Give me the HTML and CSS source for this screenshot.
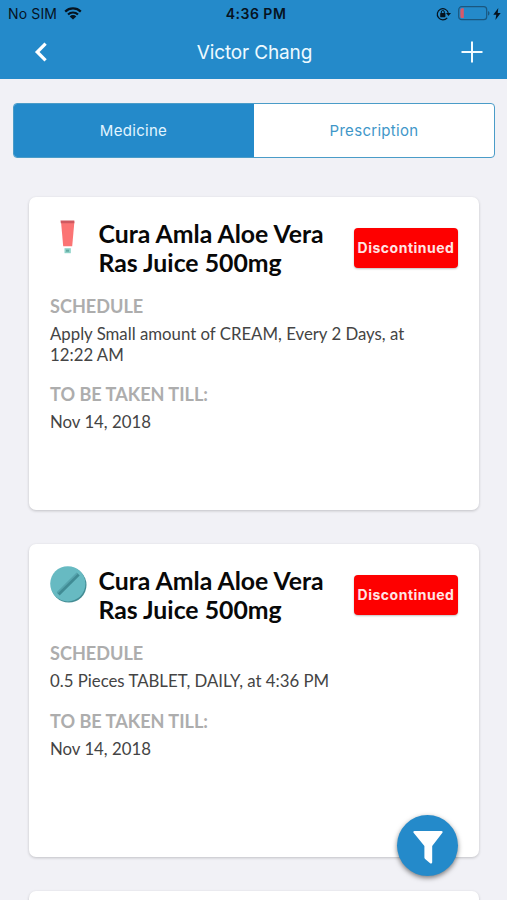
FILE: index.html
```html
<!DOCTYPE html>
<html lang="en">
<head>
    <meta charset="UTF-8">
    <meta name="viewport" content="width=device-width, initial-scale=1.0">
    <title>Victor Chang</title>
    <link rel="stylesheet" href="styles.css">
</head>
<body>
    <header class="header">
        <div class="status-bar">
            <div class="carrier">
                <span>No SIM</span>
                <svg class="wifi" viewBox="0 0 18 13">
                    <path d="M1.2 4.6a11.2 11.2 0 0 1 15.6 0M4 7.5a7.2 7.2 0 0 1 10 0" fill="none" stroke="#06131f" stroke-width="2.2"/>
                    <path d="M9 12.6L5.7 9.4a4.7 4.7 0 0 1 6.6 0z" fill="#06131f"/>
                </svg>
            </div>
            <div class="time">4:36 PM</div>
            <div class="indicators">
                <svg class="lock" viewBox="0 0 15 14">
                    <path d="M11.2 10.8a5.6 5.6 0 1 1 1.1-4.9" fill="none" stroke="#06131f" stroke-width="1.2"/>
                    <path d="M10 6h5l-2.5 3z" fill="#06131f"/>
                    <rect x="4.2" y="6" width="5.2" height="4.2" rx=".6" fill="#06131f"/>
                    <path d="M5.3 6.2V5a1.5 1.5 0 0 1 3 0v1.2" fill="none" stroke="#06131f"/>
                </svg>
                <svg class="battery" viewBox="0 0 32 15">
                    <rect x=".7" y=".7" width="28" height="13" rx="3" fill="none" stroke="#1a577f" stroke-width="1.2"/>
                    <path d="M30 5v4.6c2-.8 2-3.8 0-4.6z" fill="#1a577f"/>
                    <path d="M4 2.3h1.8v9.8H4a1.6 1.6 0 0 1-1.6-1.6V3.9A1.6 1.6 0 0 1 4 2.3z" fill="#d9596a"/>
                </svg>
                <svg class="bolt" viewBox="0 0 8 12">
                    <path d="M5.3 0L.3 6.8h3L2.4 12l5.3-7.1h-3z" fill="#06131f"/>
                </svg>
            </div>
        </div>
        <div class="nav-bar">
            <svg class="back" viewBox="0 0 14 20">
                <path d="M11.6 1.6L3.2 10l8.4 8.4" fill="none" stroke="#fff" stroke-width="3.2"/>
            </svg>
            <h1>Victor Chang</h1>
            <svg class="add" viewBox="0 0 22 22">
                <path d="M11 .5v21M.5 11h21" stroke="#f2fbff" stroke-width="2"/>
            </svg>
        </div>
    </header>

    <div class="tabs">
        <div class="tab active">Medicine</div>
        <div class="tab">Prescription</div>
    </div>

    <main class="list">
        <section class="card">
            <div class="card-top">
                <svg class="med-icon" viewBox="0 0 38 38">
                    <path d="M11 2.5h13.4L22.2 27.2h-9z" fill="#fb7474"/>
                    <path d="M10.5 1.5h13.8v2.8H10.8z" fill="#cf5960"/>
                    <path d="M14.5 29.2h6.3v5h-6.3z" fill="#8ed2c8"/>
                    <path d="M16 30.7h3v2h-3z" fill="#62aaa2"/>
                </svg>
                <h2>Cura Amla Aloe Vera Ras Juice 500mg</h2>
                <span class="status">Discontinued</span>
            </div>
            <h3>SCHEDULE</h3>
            <p>Apply Small amount of CREAM, Every 2 Days, at 12:22 AM</p>
            <h3>TO BE TAKEN TILL:</h3>
            <p>Nov 14, 2018</p>
        </section>

        <section class="card">
            <div class="card-top">
                <svg class="med-icon" viewBox="0 0 38 38">
                    <circle cx="18.8" cy="18.9" r="17.7" fill="#438c94"/>
                    <circle cx="17.8" cy="17.8" r="17.6" fill="#67bac2"/>
                    <path d="M8.2 28L28.3 8.2" stroke="#408b94" stroke-width="4"/>
                    <path d="M7.4 26.7L27.2 7.1" stroke="#57a5ae" stroke-width="1.5"/>
                </svg>
                <h2>Cura Amla Aloe Vera Ras Juice 500mg</h2>
                <span class="status">Discontinued</span>
            </div>
            <h3>SCHEDULE</h3>
            <p>0.5 Pieces TABLET, DAILY, at 4:36 PM</p>
            <h3>TO BE TAKEN TILL:</h3>
            <p>Nov 14, 2018</p>
        </section>

        <section class="card"></section>
    </main>

    <div class="filter-btn">
        <svg viewBox="0 0 30 34">
            <path d="M1.5 1h27c1 0 1.5 1 .9 1.8L19.2 16v16.2c0 1.2-1.3 1.7-2.1 1l-5-4.3c-.5-.4-.7-.8-.7-1.4V16L.6 2.8C0 2 .5 1 1.5 1z" fill="#fff"/>
        </svg>
    </div>
</body>
</html>
```
FILE: styles.css
```css
* {
    box-sizing: border-box;
}
body {
    font-family: Lato, sans-serif;
    background: #f1f1f6;
    height: 900px;
    margin: 0;
    overflow: hidden;
}
h1, h2, h3, p {
    margin: 0;
}
svg {
    display: block;
    flex: none;
}
.header {
    background: #248aca;
    height: 79px;
    font-family: Inter, sans-serif;
}
.status-bar {
    display: grid;
    grid-template-columns: 1fr auto 1fr;
    align-items: center;
    height: 27px;
    padding: 0 6px 0 8px;
    color: #06131f;
    font-size: 14px;
}
.carrier {
    display: flex;
    align-items: center;
    gap: 7px;
    letter-spacing: 0.15px;
}
.wifi {
    width: 18px;
    height: 13px;
}
.time {
    padding-left: 3px;
    font-weight: 600;
    letter-spacing: 0.5px;
}
.indicators {
    display: flex;
    justify-content: flex-end;
    align-items: center;
}
.lock {
    width: 15px;
    height: 14px;
    margin-right: 7px;
}
.battery {
    width: 32px;
    height: 15px;
    margin-right: 3px;
}
.bolt {
    width: 8px;
    height: 12px;
}
.nav-bar {
    display: grid;
    grid-template-columns: 1fr auto 1fr;
    align-items: center;
    height: 50px;
    padding: 0 24px 0 26px;
}
.back {
    width: 14px;
    height: 20px;
    margin-left: 8px;
}
.nav-bar h1 {
    color: #eefaff;
    font-size: 19px;
    font-weight: 400;
    letter-spacing: -0.15px;
}
.add {
    width: 22px;
    height: 22px;
    justify-self: end;
}
.tabs {
    display: grid;
    grid-template-columns: 1fr 1fr;
    height: 55px;
    margin: 24px 12px 0 13px;
    border: 1px solid #4a9cc8;
    border-radius: 4px;
    background: #fff;
    overflow: hidden;
    font-family: Inter, sans-serif;
}
.tab {
    display: flex;
    align-items: center;
    justify-content: center;
    color: #3f97c9;
    font-size: 15px;
    letter-spacing: 0.3px;
}
.tab.active {
    padding-right: 1px;
    background: #248aca;
    color: #e2f5ff;
}
.list {
    display: flex;
    flex-direction: column;
    gap: 34px;
    height: 742px;
    padding: 39px 28px 0 29px;
    overflow: hidden;
}
.card {
    flex: none;
    height: 313px;
    padding: 22px 21px;
    background: #fff;
    border-radius: 7px;
    box-shadow: 0 1px 3px rgba(0, 0, 0, 0.2);
}
.card-top {
    display: flex;
    align-items: flex-start;
}
.med-icon {
    width: 38px;
    height: 38px;
    margin-right: 10.5px;
}
.card-top h2 {
    width: 240px;
    color: #080808;
    font-size: 24.8px;
    font-weight: 700;
    line-height: 29px;
}
.status {
    display: flex;
    flex: none;
    align-items: center;
    justify-content: center;
    width: 104px;
    height: 40px;
    margin: 9px 0 0 15.5px;
    padding-bottom: 2px;
    border-radius: 4px;
    background: #fe0000;
    box-shadow: 0 1px 2px rgba(0, 0, 0, 0.25);
    color: #ffe4e4;
    font-family: Inter, sans-serif;
    font-size: 14px;
    font-weight: 700;
    letter-spacing: 0.5px;
}
.card h3 {
    margin-top: 18px;
    color: #adadad;
    font-size: 18.1px;
    font-weight: 700;
    line-height: 22px;
}
.card p {
    max-width: 380px;
    margin-top: 7.3px;
    color: #444;
    font-size: 16.8px;
    line-height: 20.3px;
}
.filter-btn {
    position: absolute;
    left: 397px;
    top: 815px;
    display: flex;
    align-items: center;
    justify-content: center;
    width: 61px;
    height: 61px;
    padding-top: 2px;
    border-radius: 50%;
    background: #248aca;
    box-shadow: 0 2px 5px rgba(0, 0, 0, 0.5);
}
.filter-btn svg {
    width: 30px;
    height: 34px;
}
```
